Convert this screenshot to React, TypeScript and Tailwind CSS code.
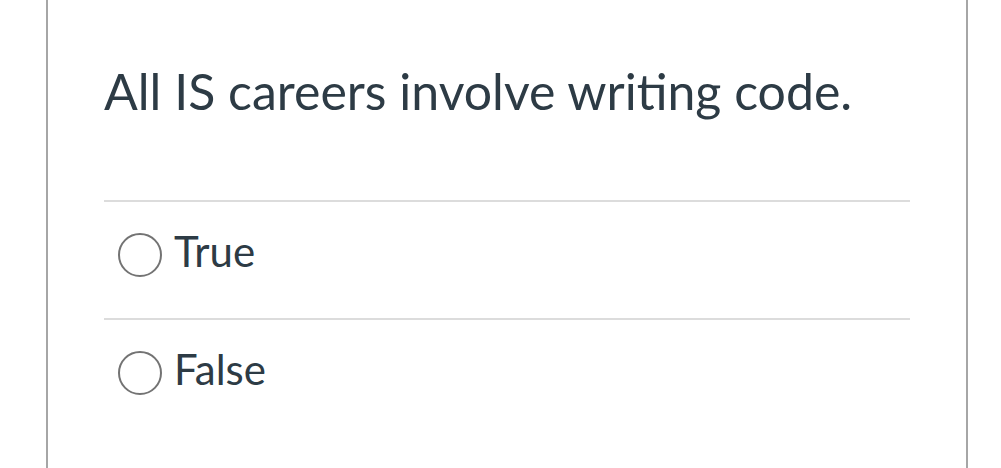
const answers = ['True', 'False'];

function Radio() {
  return <span className="block w-[44px] h-[44px] shrink-0 rounded-full border-2 border-[#737373] bg-white" />;
}

export default function App() {
  return (
    <div className="h-[468px] bg-white overflow-hidden font-['Lato',sans-serif] text-[#2d3b45]">
      <div className="ml-[46px] w-[922px] h-full border-x-2 border-[#a6a6a6] px-[56px]">
        <div className="h-[200px] pt-[61px] text-[50px] leading-[60px]">
          All IS careers involve writing code.
        </div>
        {answers.map(answer => (
          <div key={answer} className="border-t-2 border-[#dcdcdc] h-[118px] flex items-start">
            <div className="ml-[14px] mt-[31px]">
              <Radio />
            </div>
            <span className="ml-[12px] mt-[24px] text-[42px] leading-[50px]">{answer}</span>
          </div>
        ))}
      </div>
    </div>
  );
}
